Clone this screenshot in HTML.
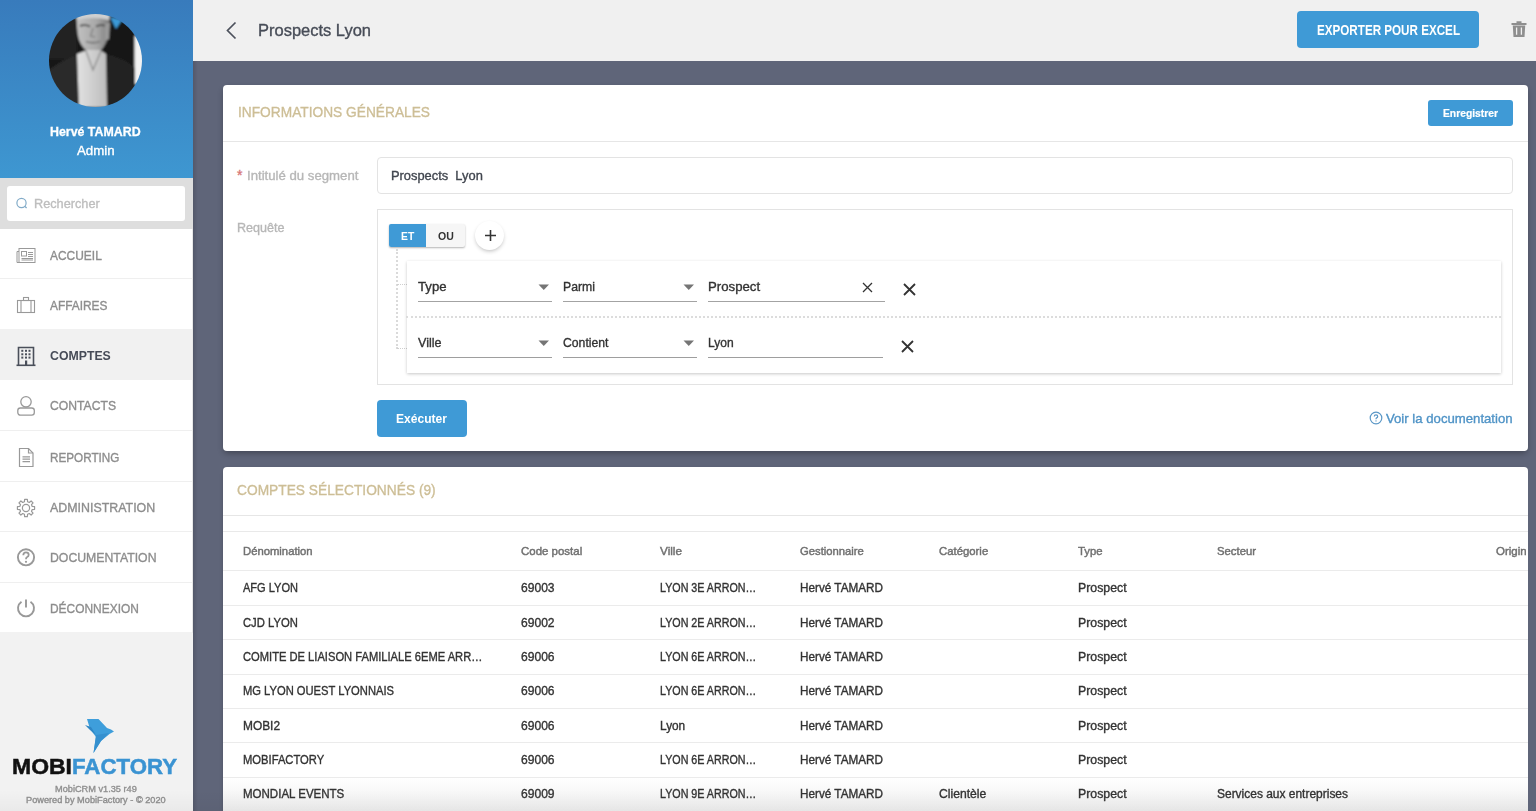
<!DOCTYPE html>
<html><head><meta charset="utf-8">
<style>
*{margin:0;padding:0;box-sizing:border-box}
html,body{width:1536px;height:811px;overflow:hidden;font-family:"Liberation Sans",sans-serif;background:#5f6579;position:relative}
.a{position:absolute}
.t{position:absolute;white-space:pre;transform-origin:0 0}
.sep{position:absolute;height:1px;background:#efefef}
</style></head><body>
<!-- sidebar -->
<div class="a" style="left:0;top:0;width:193px;height:811px;background:#f2f2f2"></div>
<div class="a" style="left:0;top:0;width:193px;height:178px;background:linear-gradient(#387bbc,#3e97d1)"></div>
<div class="a" style="left:0;top:178px;width:193px;height:51px;background:#dedede"></div>
<div class="a" style="left:7px;top:186px;width:178px;height:35px;background:#fff;border-radius:3px"></div>
<svg class="a" style="left:14px;top:196px" width="16" height="14" viewBox="0 0 16 14"><circle cx="7.5" cy="7" r="4.6" fill="none" stroke="#82abc8" stroke-width="1.2"/><path d="M10.6 10.1L12.6 12" stroke="#82abc8" stroke-width="1.3"/></svg>
<div class="a" style="left:0;top:229px;width:193px;height:403px;background:#fff"></div>
<div class="a" style="left:0;top:329px;width:193px;height:51px;background:#f1f1f1"></div>
<div class="sep" style="left:0;top:278px;width:193px"></div>
<div class="sep" style="left:0;top:430px;width:193px"></div>
<div class="sep" style="left:0;top:481px;width:193px"></div>
<div class="sep" style="left:0;top:531px;width:193px"></div>
<div class="sep" style="left:0;top:582px;width:193px"></div>
<!-- avatar -->
<svg class="a" style="left:49px;top:14px" width="93" height="93" viewBox="0 0 93 93">
  <defs><clipPath id="cc"><circle cx="46.5" cy="46.5" r="46.5"/></clipPath>
  <filter id="bl" x="-10%" y="-10%" width="120%" height="120%"><feGaussianBlur stdDeviation="0.9"/></filter>
  <linearGradient id="fg" x1="0" y1="0" x2="1" y2="0"><stop offset="0" stop-color="#c2c2c2"/><stop offset="0.6" stop-color="#a8a8a8"/><stop offset="1" stop-color="#7a7a7a"/></linearGradient>
  <linearGradient id="sg" x1="0" y1="0" x2="1" y2="0"><stop offset="0" stop-color="#e2e2e2"/><stop offset="1" stop-color="#bcbcbc"/></linearGradient></defs>
  <g clip-path="url(#cc)"><g filter="url(#bl)">
    <rect x="-5" y="-5" width="103" height="103" fill="#181818"/>
    <path d="M0 0 H28 V45 H0Z" fill="#222"/>
    <path d="M85.5 22 L95 22 L95 70 L85.5 70 Z" fill="#f3f3f3"/>
    <path d="M61 3 L73 6 L67 15 Z" fill="#3b9ad8"/>
    <path d="M27 -2 L61 -2 L60 18 Q58 31 51 37 L38 37 Q30 31 28.5 19 Z" fill="url(#fg)"/>
    <path d="M27 -2 L61 -2 L60 6 Q44 2 28 6Z" fill="#d0d0d0"/>
    <path d="M31 12 Q36 10 41 12.5" stroke="#555" stroke-width="2" fill="none"/>
    <path d="M47 12.5 Q52 10 57 12" stroke="#555" stroke-width="2" fill="none"/>
    <path d="M44 14 L41.5 22 L46 23" stroke="#888" stroke-width="1.6" fill="none"/>
    <path d="M37 27.5 Q44 30 51 27.5" stroke="#777" stroke-width="1.8" fill="none"/>
    <path d="M56 10 L61 9 L60 25 L56 27Z" fill="#9a9a9a"/>
    <path d="M0 56 Q14 45 28 41 L31 93 L0 93 Z" fill="#2a2a2a"/>
    <path d="M57 40 Q75 44 86 54 L86 93 L57 93 Z" fill="#232323"/>
    <path d="M28 40 L38 36 L51 36 L57 40 L58 93 L30 93 Z" fill="url(#sg)"/>
    <path d="M37 37 L44 56 L52 37" stroke="#8f8f8f" stroke-width="1.4" fill="none"/>
  </g></g>
</svg>
<!-- menu icons -->
<svg class="a" style="left:14px;top:245px" width="24" height="20" viewBox="0 0 24 20" fill="none" stroke="#999" stroke-width="1">
  <rect x="5" y="3.5" width="16" height="14"/><path d="M5 6.5 H3 V17.5 H5"/><rect x="7.5" y="6.5" width="5" height="4.5"/>
  <path d="M14 7.5H19M14 9.5H19M14 11.5H19M7.5 13.5H19M7.5 15H19"/>
</svg>
<svg class="a" style="left:14px;top:294px" width="24" height="22" viewBox="0 0 24 22" fill="none" stroke="#999" stroke-width="1.1">
  <rect x="3.5" y="6.5" width="17" height="12"/><rect x="9.5" y="3.5" width="5" height="3"/><path d="M7 6.5V18.5M17 6.5V18.5"/>
</svg>
<svg class="a" style="left:14px;top:344px" width="24" height="24" viewBox="0 0 24 24">
  <path d="M4.5 21.5V3.5H19.5V21.5" fill="none" stroke="#4a4f5a" stroke-width="1.6"/><path d="M2.5 21.3H21.5" stroke="#4a4f5a" stroke-width="1.6"/>
  <g fill="#4a4f5a"><rect x="7.3" y="5.8" width="2" height="2"/><rect x="11" y="5.8" width="2" height="2"/><rect x="14.5" y="5.8" width="2" height="2"/>
  <rect x="7.3" y="9.3" width="2" height="2"/><rect x="11" y="9.3" width="2" height="2"/><rect x="14.5" y="9.3" width="2" height="2"/>
  <rect x="7.3" y="12.6" width="2" height="2"/><rect x="11" y="12.6" width="2" height="2"/><rect x="14.5" y="12.6" width="2" height="2"/>
  <rect x="11" y="16.5" width="2.2" height="4.5"/></g>
</svg>
<svg class="a" style="left:14px;top:394px" width="24" height="24" viewBox="0 0 24 24" fill="none" stroke="#999" stroke-width="1.3">
  <circle cx="12" cy="7.8" r="5.2"/><rect x="3.8" y="14" width="16.5" height="7.2" rx="2.6"/>
</svg>
<svg class="a" style="left:14px;top:445px" width="24" height="24" viewBox="0 0 24 24" fill="none" stroke="#999" stroke-width="1.2">
  <path d="M5.5 3.5H14.5L19 8V21.5H5.5Z"/><path d="M14.5 3.5V8H19"/><path d="M8.5 11.8H16M8.5 14.2H16M8.5 16.6H16"/>
</svg>
<svg class="a" style="left:14px;top:496px" width="24" height="24" viewBox="-12 -12 24 24" fill="none" stroke="#999" stroke-width="1.2">
  <path d="M-1.36 -8.59 L1.36 -8.59 L1.59 -6.20 L3.26 -5.51 L5.11 -7.04 L7.04 -5.11 L5.51 -3.26 L6.20 -1.59 L8.59 -1.36 L8.59 1.36 L6.20 1.59 L5.51 3.26 L7.04 5.11 L5.11 7.04 L3.26 5.51 L1.59 6.20 L1.36 8.59 L-1.36 8.59 L-1.59 6.20 L-3.26 5.51 L-5.11 7.04 L-7.04 5.11 L-5.51 3.26 L-6.20 1.59 L-8.59 1.36 L-8.59 -1.36 L-6.20 -1.59 L-5.51 -3.26 L-7.04 -5.11 L-5.11 -7.04 L-3.26 -5.51 L-1.59 -6.20 Z" stroke-linejoin="round"/>
  <circle cx="0" cy="0" r="3.6"/>
</svg>
<svg class="a" style="left:14px;top:545px" width="24" height="24" viewBox="0 0 24 24" fill="none" stroke="#999" stroke-width="1.9">
  <circle cx="12" cy="12.3" r="8.1"/>
  <path d="M9.3 10.2 Q9.3 7.3 12 7.3 Q14.7 7.3 14.7 9.8 Q14.7 11.4 12.9 12.2 Q12 12.7 12 14.3" stroke-width="1.8"/>
  <circle cx="12" cy="16.8" r="1.1" fill="#999" stroke="none"/>
</svg>
<svg class="a" style="left:14px;top:596px" width="24" height="24" viewBox="0 0 24 24" fill="none" stroke="#999" stroke-width="1.9">
  <path d="M7.5 5.8 A8 8 0 1 0 16.5 5.8"/><path d="M12 3.5V11.5"/>
</svg>
<!-- bird logo -->
<svg class="a" style="left:80px;top:714px" width="40" height="42" viewBox="80 714 40 42">
  <path d="M87 719 L98.5 719 L107 728 L111 729.5 L114 731.5 L109.5 734 L101 741 L93.5 753 L96 737 L90 729 Z" fill="#3e9edb"/>
  <path d="M85 725 L91 727 L96 735 L90 730Z" fill="#2f86c4"/>
  <path d="M96 735 L109 733 L101 741 L93.5 753Z" fill="#3590cf"/>
</svg>
<div class="a" style="left:192px;top:229px;width:1px;height:404px;background:#e8e8e8"></div>

<!-- header -->
<div class="a" style="left:193px;top:0;width:1343px;height:61px;background:#f0f0f0"></div>
<svg class="a" style="left:222px;top:18px" width="20" height="24" viewBox="0 0 20 24"><path d="M13.5 4.5 L5.5 12.5 L13.5 20.5" fill="none" stroke="#4c515c" stroke-width="1.7"/></svg>
<div class="a" style="left:1297px;top:11px;width:182px;height:37px;background:#3f9ad6;border-radius:4px"></div>
<svg class="a" style="left:1508px;top:18px" width="22" height="22" viewBox="0 0 22 22">
  <path d="M3.5 5H18.5V7H3.5Z M8.5 3.3H13.5V5H8.5Z" fill="#8e8e8e"/>
  <path d="M4.8 7.5H17.2L16.5 19H5.5Z" fill="#8e8e8e"/>
  <path d="M8.6 9.5V16.8M13.4 9.5V16.8" stroke="#f0f0f0" stroke-width="1.3"/>
</svg>

<!-- card 1 -->
<div class="a" style="left:223px;top:85px;width:1305px;height:366px;background:#fff;border-radius:4px;box-shadow:0 3px 6px -1px rgba(0,0,0,0.32)"></div>
<div class="a" style="left:223px;top:141px;width:1305px;height:1px;background:#e6e6e6"></div>
<div class="a" style="left:1428px;top:100px;width:85px;height:26px;background:#3f9ad6;border-radius:3px"></div>
<div class="a" style="left:377px;top:157px;width:1136px;height:37px;border:1px solid #e3e3e3;border-radius:4px"></div>
<div class="a" style="left:377px;top:209px;width:1136px;height:176px;border:1px solid #e3e3e3"></div>
<!-- et/ou -->
<div class="a" style="left:389px;top:224px;width:76px;height:23px;background:#f6f6f6;box-shadow:0 1px 2px rgba(0,0,0,0.3);border-radius:2px"></div>
<div class="a" style="left:389px;top:224px;width:37px;height:23px;background:#3f9ad6;border-radius:2px 0 0 2px"></div>
<div class="a" style="left:475px;top:221px;width:29px;height:29px;background:#fff;border-radius:50%;box-shadow:0 2px 4px -1px rgba(0,0,0,0.28)"></div>
<svg class="a" style="left:483px;top:227.5px" width="15" height="15" viewBox="0 0 15 15"><path d="M7.5 2V13M2 7.5H13" stroke="#333" stroke-width="1.6"/></svg>
<!-- tree lines -->
<div class="a" style="left:396px;top:249px;width:0;height:100px;border-left:2px dotted #dadada"></div>
<div class="a" style="left:397px;top:284px;width:10px;height:0;border-top:1px dotted #cfcfcf"></div>
<div class="a" style="left:397px;top:348px;width:10px;height:0;border-top:1px dotted #cfcfcf"></div>
<!-- rules card -->
<div class="a" style="left:407px;top:261px;width:1094px;height:112px;background:#fff;box-shadow:0 1px 3px rgba(0,0,0,0.22)"></div>
<div class="a" style="left:406px;top:316px;width:1095px;height:0;border-top:2px dotted #dcdcdc"></div>
<!-- selects row 1 -->
<div class="a" style="left:418px;top:301px;width:134px;height:1px;background:#a3a3a3"></div>
<div class="a" style="left:563px;top:301px;width:134px;height:1px;background:#a3a3a3"></div>
<div class="a" style="left:708px;top:301px;width:177px;height:1px;background:#a3a3a3"></div>
<svg class="a" style="left:538px;top:283.5px" width="12" height="7" viewBox="0 0 12 7"><path d="M0.5 0.5H11L5.75 6Z" fill="#757575"/></svg>
<svg class="a" style="left:683px;top:283.5px" width="12" height="7" viewBox="0 0 12 7"><path d="M0.5 0.5H11L5.75 6Z" fill="#757575"/></svg>
<svg class="a" style="left:861px;top:281px" width="13" height="13" viewBox="0 0 13 13"><path d="M2 2L11 11M11 2L2 11" stroke="#333" stroke-width="1.3"/></svg>
<svg class="a" style="left:902px;top:282px" width="15" height="15" viewBox="0 0 15 15"><path d="M2 2L13 13M13 2L2 13" stroke="#333" stroke-width="1.8"/></svg>
<!-- selects row 2 -->
<div class="a" style="left:418px;top:357px;width:134px;height:1px;background:#9e9e9e"></div>
<div class="a" style="left:563px;top:357px;width:134px;height:1px;background:#9e9e9e"></div>
<div class="a" style="left:708px;top:357px;width:175px;height:1px;background:#9e9e9e"></div>
<svg class="a" style="left:538px;top:339.5px" width="12" height="7" viewBox="0 0 12 7"><path d="M0.5 0.5H11L5.75 6Z" fill="#757575"/></svg>
<svg class="a" style="left:683px;top:339.5px" width="12" height="7" viewBox="0 0 12 7"><path d="M0.5 0.5H11L5.75 6Z" fill="#757575"/></svg>
<svg class="a" style="left:900px;top:339px" width="15" height="15" viewBox="0 0 15 15"><path d="M2 2L13 13M13 2L2 13" stroke="#333" stroke-width="1.8"/></svg>
<!-- execute -->
<div class="a" style="left:377px;top:400px;width:90px;height:37px;background:#3f9ad6;border-radius:4px"></div>
<svg class="a" style="left:1368px;top:410px" width="16" height="16" viewBox="0 0 16 16" fill="none" stroke="#5a97c6" stroke-width="1.2">
  <circle cx="8" cy="8" r="5.8"/><path d="M6.3 6.6 Q6.3 4.9 8 4.9 Q9.7 4.9 9.7 6.4 Q9.7 7.4 8.6 7.9 Q8 8.2 8 9.3"/><circle cx="8" cy="10.9" r="0.7" fill="#5a97c6" stroke="none"/>
</svg>

<!-- card 2 -->
<div class="a" style="left:223px;top:467px;width:1305px;height:360px;background:#fff;border-radius:4px;box-shadow:0 2px 4px -1px rgba(0,0,0,0.28)"></div>
<div class="a" style="left:223px;top:515px;width:1305px;height:1px;background:#e6e6e6"></div>
<div class="a" style="left:223px;top:531px;width:1305px;height:1px;background:#e9e9e9"></div>
<div class="sep" style="left:223px;top:570px;width:1305px;background:#ebebeb"></div>
<div class="sep" style="left:223px;top:605px;width:1305px;background:#ebebeb"></div>
<div class="sep" style="left:223px;top:639px;width:1305px;background:#ebebeb"></div>
<div class="sep" style="left:223px;top:674px;width:1305px;background:#ebebeb"></div>
<div class="sep" style="left:223px;top:708px;width:1305px;background:#ebebeb"></div>
<div class="sep" style="left:223px;top:742px;width:1305px;background:#ebebeb"></div>
<div class="sep" style="left:223px;top:777px;width:1305px;background:#ebebeb"></div>
<div class="a" style="left:223px;top:778px;width:1305px;height:33px;background:linear-gradient(rgba(240,240,240,0),rgba(236,236,236,0.9))"></div>

<div class="t" style="left:258.4px;top:20.8px;font-size:17px;line-height:18.99px;color:#474c57;font-weight:400;transform:scaleX(0.9696);-webkit-text-stroke:0.35px;">Prospects Lyon</div>
<div class="t" style="left:1316.9px;top:22.7px;font-size:14px;line-height:15.64px;color:#ffffff;font-weight:700;transform:scaleX(0.8318);">EXPORTER POUR EXCEL</div>
<div class="t" style="left:50.1px;top:125.1px;font-size:13px;line-height:14.52px;color:#ffffff;font-weight:700;transform:scaleX(0.9526);-webkit-text-stroke:0.3px #fff;">Hervé TAMARD</div>
<div class="t" style="left:76.6px;top:144.0px;font-size:13px;line-height:14.52px;color:#ffffff;font-weight:400;transform:scaleX(1.0201);-webkit-text-stroke:0.35px;">Admin</div>
<div class="t" style="left:33.9px;top:196.9px;font-size:13px;line-height:14.52px;color:#bebebe;font-weight:400;transform:scaleX(0.9776);-webkit-text-stroke:0.35px;">Rechercher</div>
<div class="t" style="left:49.9px;top:248.5px;font-size:13px;line-height:14.52px;color:#8d8d8d;font-weight:400;transform:scaleX(0.9191);-webkit-text-stroke:0.35px;">ACCUEIL</div>
<div class="t" style="left:49.9px;top:298.8px;font-size:13px;line-height:14.52px;color:#8d8d8d;font-weight:400;transform:scaleX(0.9147);-webkit-text-stroke:0.35px;">AFFAIRES</div>
<div class="t" style="left:49.9px;top:349.4px;font-size:13px;line-height:14.52px;color:#464b57;font-weight:700;transform:scaleX(0.9456);">COMPTES</div>
<div class="t" style="left:49.9px;top:399.4px;font-size:13px;line-height:14.52px;color:#8d8d8d;font-weight:400;transform:scaleX(0.9370);-webkit-text-stroke:0.35px;">CONTACTS</div>
<div class="t" style="left:49.9px;top:451.0px;font-size:13px;line-height:14.52px;color:#8d8d8d;font-weight:400;transform:scaleX(0.9006);-webkit-text-stroke:0.35px;">REPORTING</div>
<div class="t" style="left:49.9px;top:501.2px;font-size:13px;line-height:14.52px;color:#8d8d8d;font-weight:400;transform:scaleX(0.9541);-webkit-text-stroke:0.35px;">ADMINISTRATION</div>
<div class="t" style="left:49.9px;top:551.4px;font-size:13px;line-height:14.52px;color:#8d8d8d;font-weight:400;transform:scaleX(0.9433);-webkit-text-stroke:0.35px;">DOCUMENTATION</div>
<div class="t" style="left:49.9px;top:602.4px;font-size:13px;line-height:14.52px;color:#8d8d8d;font-weight:400;transform:scaleX(0.9184);-webkit-text-stroke:0.35px;">DÉCONNEXION</div>
<div class="t" style="left:12.0px;top:754.7px;font-size:22px;line-height:24.57px;color:#111111;font-weight:700;transform:scaleX(1.0443);-webkit-text-stroke:0.5px #111;">MOBI</div>
<div class="t" style="left:72.1px;top:754.7px;font-size:22px;line-height:24.57px;color:#3a93d2;font-weight:700;transform:scaleX(1.0105);-webkit-text-stroke:0.5px #3a93d2;">FACTORY</div>
<div class="t" style="left:54.6px;top:784.0px;font-size:9px;line-height:10.05px;color:#8f8f8f;font-weight:400;transform:scaleX(1.0221);-webkit-text-stroke:0.35px;">MobiCRM v1.35 r49</div>
<div class="t" style="left:25.7px;top:795.0px;font-size:9px;line-height:10.05px;color:#8f8f8f;font-weight:400;transform:scaleX(1.0219);-webkit-text-stroke:0.35px;">Powered by MobiFactory - © 2020</div>
<div class="t" style="left:237.6px;top:104.4px;font-size:15px;line-height:16.75px;color:#cdbe96;font-weight:400;transform:scaleX(0.9153);-webkit-text-stroke:0.35px;">INFORMATIONS GÉNÉRALES</div>
<div class="t" style="left:1443.1px;top:106.9px;font-size:11px;line-height:12.29px;color:#ffffff;font-weight:700;transform:scaleX(0.9369);-webkit-text-stroke:0.2px #fff;">Enregistrer</div>
<div class="t" style="left:237.0px;top:172.6px;font-size:14px;line-height:15.64px;color:#d77878;font-weight:400;transform:scaleX(1.0000);-webkit-text-stroke:0.35px;top:168px">*</div>
<div class="t" style="left:246.7px;top:169.0px;font-size:13px;line-height:14.52px;color:#b7b7b7;font-weight:400;transform:scaleX(1.0140);-webkit-text-stroke:0.35px;">Intitulé du segment</div>
<div class="t" style="left:391.3px;top:169.0px;font-size:13px;line-height:14.52px;color:#41464f;font-weight:400;transform:scaleX(0.9899);-webkit-text-stroke:0.35px;">Prospects  Lyon</div>
<div class="t" style="left:237.4px;top:220.8px;font-size:13px;line-height:14.52px;color:#b7b7b7;font-weight:400;transform:scaleX(0.9663);-webkit-text-stroke:0.35px;">Requête</div>
<div class="t" style="left:400.7px;top:230.4px;font-size:11px;line-height:12.29px;color:#ffffff;font-weight:700;transform:scaleX(0.9387);">ET</div>
<div class="t" style="left:437.8px;top:230.4px;font-size:11px;line-height:12.29px;color:#333333;font-weight:700;transform:scaleX(0.9576);">OU</div>
<div class="t" style="left:418.1px;top:279.8px;font-size:13px;line-height:14.52px;color:#333333;font-weight:400;transform:scaleX(1.0111);-webkit-text-stroke:0.35px;">Type</div>
<div class="t" style="left:563.1px;top:279.8px;font-size:13px;line-height:14.52px;color:#333333;font-weight:400;transform:scaleX(0.9425);-webkit-text-stroke:0.35px;">Parmi</div>
<div class="t" style="left:707.7px;top:279.5px;font-size:13px;line-height:14.52px;color:#333333;font-weight:400;transform:scaleX(1.0153);-webkit-text-stroke:0.35px;">Prospect</div>
<div class="t" style="left:418.1px;top:336.3px;font-size:13px;line-height:14.52px;color:#333333;font-weight:400;transform:scaleX(0.9653);-webkit-text-stroke:0.35px;">Ville</div>
<div class="t" style="left:563.1px;top:336.3px;font-size:13px;line-height:14.52px;color:#333333;font-weight:400;transform:scaleX(0.9397);-webkit-text-stroke:0.35px;">Contient</div>
<div class="t" style="left:707.7px;top:336.3px;font-size:13px;line-height:14.52px;color:#333333;font-weight:400;transform:scaleX(0.9272);-webkit-text-stroke:0.35px;">Lyon</div>
<div class="t" style="left:396.2px;top:411.9px;font-size:13px;line-height:14.52px;color:#ffffff;font-weight:700;transform:scaleX(0.9268);">Exécuter</div>
<div class="t" style="left:1386.0px;top:411.9px;font-size:13px;line-height:14.52px;color:#4f93c6;font-weight:400;transform:scaleX(1.0125);-webkit-text-stroke:0.35px;">Voir la documentation</div>
<div class="t" style="left:237.4px;top:481.6px;font-size:15px;line-height:16.75px;color:#cdbe96;font-weight:400;transform:scaleX(0.9169);-webkit-text-stroke:0.35px;">COMPTES SÉLECTIONNÉS (9)</div>
<div class="t" style="left:243.1px;top:545.4px;font-size:11.5px;line-height:12.85px;color:#707070;font-weight:400;transform:scaleX(0.9807);-webkit-text-stroke:0.35px;-webkit-text-stroke:0.45px;">Dénomination</div>
<div class="t" style="left:521.1px;top:545.4px;font-size:11.5px;line-height:12.85px;color:#707070;font-weight:400;transform:scaleX(0.9971);-webkit-text-stroke:0.35px;-webkit-text-stroke:0.45px;">Code postal</div>
<div class="t" style="left:660.4px;top:545.4px;font-size:11.5px;line-height:12.85px;color:#707070;font-weight:400;transform:scaleX(1.0218);-webkit-text-stroke:0.35px;-webkit-text-stroke:0.45px;">Ville</div>
<div class="t" style="left:799.7px;top:545.4px;font-size:11.5px;line-height:12.85px;color:#707070;font-weight:400;transform:scaleX(0.9798);-webkit-text-stroke:0.35px;-webkit-text-stroke:0.45px;">Gestionnaire</div>
<div class="t" style="left:938.6px;top:545.4px;font-size:11.5px;line-height:12.85px;color:#707070;font-weight:400;transform:scaleX(0.9865);-webkit-text-stroke:0.35px;-webkit-text-stroke:0.45px;">Catégorie</div>
<div class="t" style="left:1078.2px;top:545.4px;font-size:11.5px;line-height:12.85px;color:#707070;font-weight:400;transform:scaleX(0.9865);-webkit-text-stroke:0.35px;-webkit-text-stroke:0.45px;">Type</div>
<div class="t" style="left:1217.4px;top:545.4px;font-size:11.5px;line-height:12.85px;color:#707070;font-weight:400;transform:scaleX(0.9838);-webkit-text-stroke:0.35px;-webkit-text-stroke:0.45px;">Secteur</div>
<div class="t" style="left:1495.6px;top:545.4px;font-size:11.5px;line-height:12.85px;color:#707070;font-weight:400;transform:scaleX(0.9979);-webkit-text-stroke:0.35px;-webkit-text-stroke:0.45px;">Origine</div>
<div class="t" style="left:243.1px;top:582.2px;font-size:12px;line-height:13.40px;color:#333333;font-weight:400;transform:scaleX(0.9198);-webkit-text-stroke:0.35px;">AFG LYON</div>
<div class="t" style="left:521.1px;top:582.2px;font-size:12px;line-height:13.40px;color:#333333;font-weight:400;transform:scaleX(1.0067);-webkit-text-stroke:0.35px;">69003</div>
<div class="t" style="left:660.4px;top:582.2px;font-size:12px;line-height:13.40px;color:#333333;font-weight:400;transform:scaleX(0.8932);-webkit-text-stroke:0.35px;">LYON 3E ARRON…</div>
<div class="t" style="left:799.7px;top:582.2px;font-size:12px;line-height:13.40px;color:#333333;font-weight:400;transform:scaleX(0.9775);-webkit-text-stroke:0.35px;">Hervé TAMARD</div>
<div class="t" style="left:1078.2px;top:582.2px;font-size:12px;line-height:13.40px;color:#333333;font-weight:400;transform:scaleX(1.0262);-webkit-text-stroke:0.35px;">Prospect</div>
<div class="t" style="left:243.1px;top:616.6px;font-size:12px;line-height:13.40px;color:#333333;font-weight:400;transform:scaleX(0.9375);-webkit-text-stroke:0.35px;">CJD LYON</div>
<div class="t" style="left:521.1px;top:616.6px;font-size:12px;line-height:13.40px;color:#333333;font-weight:400;transform:scaleX(1.0067);-webkit-text-stroke:0.35px;">69002</div>
<div class="t" style="left:660.4px;top:616.6px;font-size:12px;line-height:13.40px;color:#333333;font-weight:400;transform:scaleX(0.8932);-webkit-text-stroke:0.35px;">LYON 2E ARRON…</div>
<div class="t" style="left:799.7px;top:616.6px;font-size:12px;line-height:13.40px;color:#333333;font-weight:400;transform:scaleX(0.9775);-webkit-text-stroke:0.35px;">Hervé TAMARD</div>
<div class="t" style="left:1078.2px;top:616.6px;font-size:12px;line-height:13.40px;color:#333333;font-weight:400;transform:scaleX(1.0262);-webkit-text-stroke:0.35px;">Prospect</div>
<div class="t" style="left:243.1px;top:650.9px;font-size:12px;line-height:13.40px;color:#333333;font-weight:400;transform:scaleX(0.9300);-webkit-text-stroke:0.35px;">COMITE DE LIAISON FAMILIALE 6EME ARR…</div>
<div class="t" style="left:521.1px;top:650.9px;font-size:12px;line-height:13.40px;color:#333333;font-weight:400;transform:scaleX(1.0067);-webkit-text-stroke:0.35px;">69006</div>
<div class="t" style="left:660.4px;top:650.9px;font-size:12px;line-height:13.40px;color:#333333;font-weight:400;transform:scaleX(0.8932);-webkit-text-stroke:0.35px;">LYON 6E ARRON…</div>
<div class="t" style="left:799.7px;top:650.9px;font-size:12px;line-height:13.40px;color:#333333;font-weight:400;transform:scaleX(0.9775);-webkit-text-stroke:0.35px;">Hervé TAMARD</div>
<div class="t" style="left:1078.2px;top:650.9px;font-size:12px;line-height:13.40px;color:#333333;font-weight:400;transform:scaleX(1.0262);-webkit-text-stroke:0.35px;">Prospect</div>
<div class="t" style="left:243.1px;top:685.3px;font-size:12px;line-height:13.40px;color:#333333;font-weight:400;transform:scaleX(0.9318);-webkit-text-stroke:0.35px;">MG LYON OUEST LYONNAIS</div>
<div class="t" style="left:521.1px;top:685.3px;font-size:12px;line-height:13.40px;color:#333333;font-weight:400;transform:scaleX(1.0067);-webkit-text-stroke:0.35px;">69006</div>
<div class="t" style="left:660.4px;top:685.3px;font-size:12px;line-height:13.40px;color:#333333;font-weight:400;transform:scaleX(0.8932);-webkit-text-stroke:0.35px;">LYON 6E ARRON…</div>
<div class="t" style="left:799.7px;top:685.3px;font-size:12px;line-height:13.40px;color:#333333;font-weight:400;transform:scaleX(0.9775);-webkit-text-stroke:0.35px;">Hervé TAMARD</div>
<div class="t" style="left:1078.2px;top:685.3px;font-size:12px;line-height:13.40px;color:#333333;font-weight:400;transform:scaleX(1.0262);-webkit-text-stroke:0.35px;">Prospect</div>
<div class="t" style="left:243.1px;top:719.6px;font-size:12px;line-height:13.40px;color:#333333;font-weight:400;transform:scaleX(0.9908);-webkit-text-stroke:0.35px;">MOBI2</div>
<div class="t" style="left:521.1px;top:719.6px;font-size:12px;line-height:13.40px;color:#333333;font-weight:400;transform:scaleX(1.0067);-webkit-text-stroke:0.35px;">69006</div>
<div class="t" style="left:660.4px;top:719.6px;font-size:12px;line-height:13.40px;color:#333333;font-weight:400;transform:scaleX(0.9852);-webkit-text-stroke:0.35px;">Lyon</div>
<div class="t" style="left:799.7px;top:719.6px;font-size:12px;line-height:13.40px;color:#333333;font-weight:400;transform:scaleX(0.9775);-webkit-text-stroke:0.35px;">Hervé TAMARD</div>
<div class="t" style="left:1078.2px;top:719.6px;font-size:12px;line-height:13.40px;color:#333333;font-weight:400;transform:scaleX(1.0262);-webkit-text-stroke:0.35px;">Prospect</div>
<div class="t" style="left:243.1px;top:754.0px;font-size:12px;line-height:13.40px;color:#333333;font-weight:400;transform:scaleX(0.9343);-webkit-text-stroke:0.35px;">MOBIFACTORY</div>
<div class="t" style="left:521.1px;top:754.0px;font-size:12px;line-height:13.40px;color:#333333;font-weight:400;transform:scaleX(1.0067);-webkit-text-stroke:0.35px;">69006</div>
<div class="t" style="left:660.4px;top:754.0px;font-size:12px;line-height:13.40px;color:#333333;font-weight:400;transform:scaleX(0.8932);-webkit-text-stroke:0.35px;">LYON 6E ARRON…</div>
<div class="t" style="left:799.7px;top:754.0px;font-size:12px;line-height:13.40px;color:#333333;font-weight:400;transform:scaleX(0.9775);-webkit-text-stroke:0.35px;">Hervé TAMARD</div>
<div class="t" style="left:1078.2px;top:754.0px;font-size:12px;line-height:13.40px;color:#333333;font-weight:400;transform:scaleX(1.0262);-webkit-text-stroke:0.35px;">Prospect</div>
<div class="t" style="left:243.1px;top:788.3px;font-size:12px;line-height:13.40px;color:#333333;font-weight:400;transform:scaleX(0.9595);-webkit-text-stroke:0.35px;">MONDIAL EVENTS</div>
<div class="t" style="left:521.1px;top:788.3px;font-size:12px;line-height:13.40px;color:#333333;font-weight:400;transform:scaleX(1.0067);-webkit-text-stroke:0.35px;">69009</div>
<div class="t" style="left:660.4px;top:788.3px;font-size:12px;line-height:13.40px;color:#333333;font-weight:400;transform:scaleX(0.8932);-webkit-text-stroke:0.35px;">LYON 9E ARRON…</div>
<div class="t" style="left:799.7px;top:788.3px;font-size:12px;line-height:13.40px;color:#333333;font-weight:400;transform:scaleX(0.9775);-webkit-text-stroke:0.35px;">Hervé TAMARD</div>
<div class="t" style="left:938.6px;top:788.3px;font-size:12px;line-height:13.40px;color:#333333;font-weight:400;transform:scaleX(1.0128);-webkit-text-stroke:0.35px;">Clientèle</div>
<div class="t" style="left:1078.2px;top:788.3px;font-size:12px;line-height:13.40px;color:#333333;font-weight:400;transform:scaleX(1.0262);-webkit-text-stroke:0.35px;">Prospect</div>
<div class="t" style="left:1217.4px;top:788.3px;font-size:12px;line-height:13.40px;color:#333333;font-weight:400;transform:scaleX(0.9970);-webkit-text-stroke:0.35px;">Services aux entreprises</div>
<div class="a" style="left:193px;top:61px;width:5px;height:750px;background:linear-gradient(90deg,rgba(0,0,0,0.12),rgba(0,0,0,0))"></div>
<div class="a" style="left:0;top:790px;width:1536px;height:21px;background:linear-gradient(rgba(0,0,0,0),rgba(0,0,0,0.035))"></div>
<div class="a" style="left:1525.5px;top:535px;width:2.5px;height:33px;background:#fff"></div>
<div class="a" style="left:1528px;top:467px;width:8px;height:344px;background:#5f6579"></div>
</body></html>
